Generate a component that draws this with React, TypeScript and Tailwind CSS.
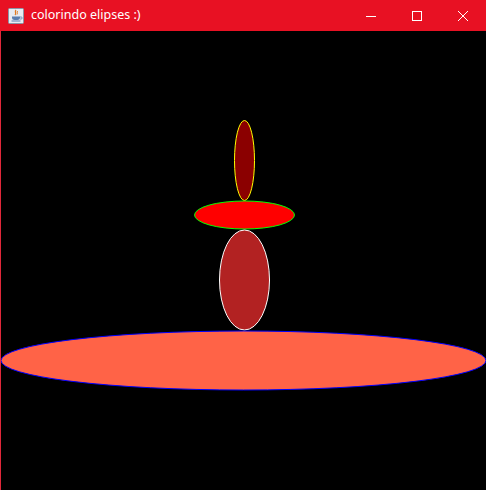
import React from "react";

export default function App() {
  return (
    <div className="w-[486px] h-[490px] bg-black flex flex-col overflow-hidden" style={{ fontFamily: '"Segoe UI", "Noto Sans", "Open Sans", sans-serif' }}>
      <div className="h-[31px] bg-[#e81123] flex items-center shrink-0">
        <svg width="16" height="16" viewBox="0 0 16 16" className="ml-[8px]">
          <rect x="0.5" y="0.5" width="15" height="15" rx="1" fill="#e8ecf2" stroke="#8a97a8" />
          <path d="M8 2 C6 4 9 5 7 7" stroke="#e07a20" strokeWidth="1.2" fill="none" />
          <path d="M9.5 3 C8.5 4.5 10 5 9 6.5" stroke="#e07a20" strokeWidth="1" fill="none" />
          <path d="M4 8.5 h8 v1.5 a2.5 2 0 0 1 -2.5 2 h-3 a2.5 2 0 0 1 -2.5 -2 z" fill="#5b7fb0" />
          <path d="M12 9 h1.2 a1 1 0 0 1 0 2 h-1.2" stroke="#5b7fb0" strokeWidth="0.8" fill="none" />
          <path d="M3.5 13 h9" stroke="#5b7fb0" strokeWidth="1" />
        </svg>
        <span className="ml-[7px] text-white text-[12.5px] leading-none">colorindo elipses :)</span>
        <div className="ml-auto flex h-full">
          <div className="w-[46px] h-full flex items-center justify-center">
            <svg width="10" height="10" viewBox="0 0 10 10"><path d="M0 5.5 H10" stroke="white" strokeWidth="1" /></svg>
          </div>
          <div className="w-[46px] h-full flex items-center justify-center">
            <svg width="10" height="10" viewBox="0 0 10 10"><rect x="0.5" y="0.5" width="9" height="9" stroke="white" strokeWidth="1" fill="none" /></svg>
          </div>
          <div className="w-[46px] h-full flex items-center justify-center">
            <svg width="10" height="10" viewBox="0 0 10 10"><path d="M0 0 L10 10 M10 0 L0 10" stroke="white" strokeWidth="1" /></svg>
          </div>
        </div>
      </div>
      <div className="flex-1 flex">
        <div className="w-[1px] bg-[#e0283a]" />
        <svg width="485" height="459" viewBox="1 31 485 459" className="block">
          <ellipse cx="244.5" cy="160.5" rx="10" ry="40" fill="#8b0000" stroke="#ffff00" strokeWidth="1" />
          <ellipse cx="244.5" cy="215" rx="50" ry="14" fill="#ff0000" stroke="#00ff00" strokeWidth="1" />
          <ellipse cx="244.5" cy="280" rx="25" ry="50" fill="#b22222" stroke="#ffffff" strokeWidth="1" />
          <ellipse cx="243.5" cy="360.5" rx="242.5" ry="29.5" fill="#ff6347" stroke="#0000ff" strokeWidth="1" />
        </svg>
      </div>
    </div>
  );
}
